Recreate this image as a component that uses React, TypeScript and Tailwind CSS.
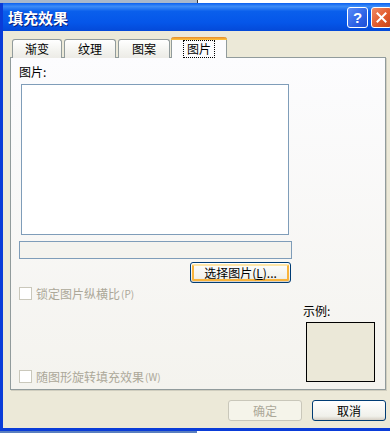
import React, { useState } from 'react';

const cjk = { fontFamily: '"Noto Sans CJK SC", "Noto Sans", sans-serif' };

const tabs = ['渐变', '纹理', '图案', '图片'];

const Checkbox: React.FC<{ label: string; hotkey: string }> = ({ label, hotkey }) => (
  <div className="flex items-center h-[13px] text-[#aca899]">
    <div className="w-[13px] h-[13px] border border-[#cac8bb] bg-white shrink-0" />
    <span className="ml-[4px] text-[12px] leading-none">{label}</span>
    <span className="text-[10px] leading-none ml-[1px]">({hotkey})</span>
  </div>
);

export default function App() {
  const [active, setActive] = useState(3);

  return (
    <div className="w-[390px] h-[433px] overflow-hidden flex flex-col bg-white" style={cjk}>
      {/* desktop behind the dialog */}
      <div className="h-[3px] flex shrink-0">
        <div className="w-[197px] bg-[#a9b8cc]" />
        <div className="w-[1px] bg-[#3a3a3a]" />
        <div className="flex-1 bg-white" />
      </div>

      <div className="w-[393px] flex-1 flex flex-col border-l-[3px] border-b-[3px] border-[#0a3cd8] shrink-0">
        {/* title bar */}
        <div className="h-[28px] flex items-center pl-[5px] pr-[1px] bg-[linear-gradient(to_bottom,#0a5ff0_0%,#3d8cf7_12%,#0a5fec_30%,#0556e9_70%,#0449d8_100%)]">
          <span className="text-white font-bold text-[15px] leading-none [text-shadow:1px_1px_0_#0a1e7a]">填充效果</span>
          <div className="flex-1" />
          <div className="w-[21px] h-[21px] rounded-[3px] border border-white bg-[linear-gradient(135deg,#5a8cf8,#2d62e6_60%,#1d4fd6)] flex items-center justify-center text-white font-bold text-[15px] leading-none" style={{ fontFamily: '"Liberation Sans", sans-serif' }}>
            ?
          </div>
          <div className="w-[21px] h-[21px] ml-[3px] rounded-[3px] border border-white bg-[linear-gradient(135deg,#f08a66,#e25a2c_55%,#c8421a)] flex items-center justify-center">
            <svg width="11" height="11" viewBox="0 0 11 11">
              <path d="M1.5 1.5 L9.5 9.5 M9.5 1.5 L1.5 9.5" stroke="white" strokeWidth="2" strokeLinecap="square" />
            </svg>
          </div>
        </div>

        {/* body */}
        <div className="flex-1 bg-[#ece9d8] px-[7px] pt-[6px] flex flex-col">
          {/* tabs */}
          <div className="flex items-end h-[21px] pl-[2px] relative z-10">
            {tabs.map((t, i) =>
              i === active ? (
                <div
                  key={t}
                  onClick={() => setActive(i)}
                  className="w-[56px] h-[21px] -ml-[1px] border-x border-[#919b9c] rounded-t-[3px] bg-[#fcfcfe] flex flex-col cursor-default"
                >
                  <div className="h-[3px] -mx-[1px] rounded-t-[3px] bg-[linear-gradient(to_bottom,#e68b2c,#ffc73c)]" />
                  <div className="flex-1 flex items-center justify-center">
                    <span className="text-[12px] leading-none px-[3px] py-[2px] border border-dotted border-black text-black">{t}</span>
                  </div>
                </div>
              ) : (
                <div
                  key={t}
                  onClick={() => setActive(i)}
                  className={`${i === 0 ? 'w-[50px]' : 'w-[52px]'} h-[19px] mr-[2px] border border-b-0 border-[#919b9c] rounded-t-[3px] bg-[linear-gradient(to_bottom,#ffffff,#f3f3ef_60%,#ecebe6)] flex items-center justify-center text-[12px] leading-none text-black cursor-default`}
                >
                  {t}
                </div>
              )
            )}
          </div>

          {/* tab panel */}
          <div className="h-[333px] -mt-[1px] border border-[#919b9c] bg-[linear-gradient(to_bottom,#fcfcfe,#f4f3ee)] shadow-[1px_1px_0_#d0cebf] pl-[8px] pt-[8px] flex">
            <div className="w-[273px] flex flex-col">
              <div className="h-[12px] text-[12px] leading-none text-black">图片:</div>
              <div className="ml-[2px] mt-[6px] w-[268px] h-[151px] border border-[#7f9db9] bg-white" />
              <div className="mt-[6px] h-[18px] border border-[#7f9db9] bg-[#f4f3ee]" />
              <div className="mt-[3px] ml-[171px] w-[101px] h-[21px] rounded-[3px] border border-[#003c74] bg-[linear-gradient(to_bottom,#ffffff,#f0f0ea_80%,#d6d0c5)] p-[1px]">
                <div className="w-full h-full rounded-[2px] border-2 border-[#f8b33b] border-t-[#fee6a8] flex items-center justify-center text-[12px] leading-none text-black">
                  选择图片(<span className="underline">L</span>)...
                </div>
              </div>
              <div className="mt-[4px]">
                <Checkbox label="锁定图片纵横比" hotkey="P" />
              </div>
              <div className="mt-[70px]">
                <Checkbox label="随图形旋转填充效果" hotkey="W" />
              </div>
            </div>

            <div className="ml-[11px] flex flex-col justify-end pb-[7px]">
              <div className="text-[12px] leading-none text-black">示例:</div>
              <div className="mt-[5px] ml-[3px] w-[69px] h-[60px] border border-black bg-[#ebe8d8]" />
            </div>
          </div>

          {/* dialog buttons */}
          <div className="flex justify-end mt-[10px]">
            <div className="w-[74px] h-[21px] rounded-[3px] border border-[#c9c7ba] bg-[#f5f4ea] flex items-center justify-center text-[12px] leading-none text-[#aca899]">
              确定
            </div>
            <div className="w-[74px] h-[21px] ml-[10px] rounded-[3px] border border-[#003c74] bg-[linear-gradient(to_bottom,#ffffff,#f0f0ea_80%,#d6d0c5)] flex items-center justify-center text-[12px] leading-none text-black">
              取消
            </div>
          </div>
        </div>
      </div>

      <div className="h-[2px] flex shrink-0">
        <div className="w-[197px] bg-[#5a7fbf]" />
        <div className="flex-1 bg-white" />
      </div>
    </div>
  );
}
